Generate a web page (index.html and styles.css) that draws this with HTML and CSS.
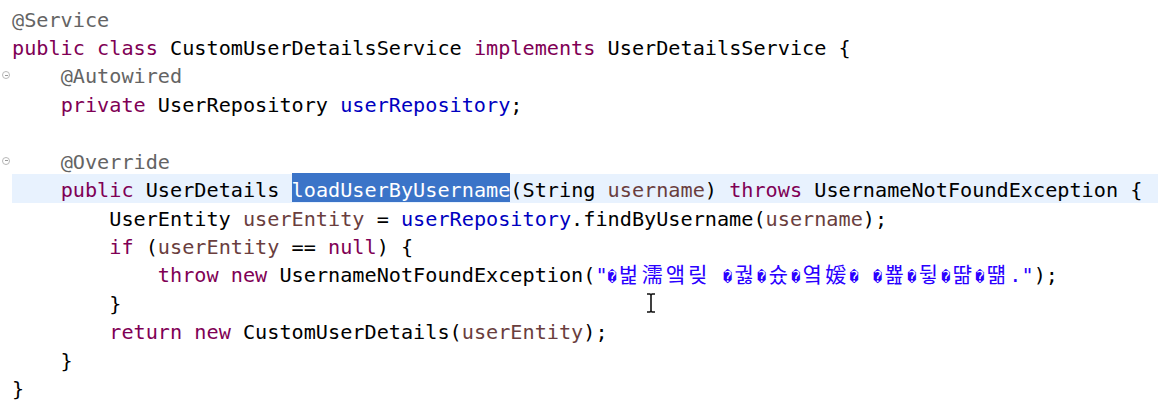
FILE: index.html
```html
<!DOCTYPE html>
<html lang="ko">
<head>
    <meta charset="UTF-8">
    <title>CustomUserDetailsService.java</title>
    <link rel="stylesheet" href="styles.css">
</head>
<body>

    <div class="editor">
        <div class="line"><span class="gutter"></span><span class="code"><span class="ann">@Service</span></span></div>
        <div class="line"><span class="gutter"></span><span class="code"><span class="kw">public</span> <span class="kw">class</span> CustomUserDetailsService <span class="kw">implements</span> UserDetailsService {</span></div>
        <div class="line"><span class="gutter"><span class="fold"></span></span><span class="code">    <span class="ann">@Autowired</span></span></div>
        <div class="line"><span class="gutter"></span><span class="code">    <span class="kw">private</span> UserRepository <span class="field">userRepository</span>;</span></div>
        <div class="line"><span class="gutter"></span><span class="code"></span></div>
        <div class="line"><span class="gutter"><span class="fold"></span></span><span class="code">    <span class="ann">@Override</span></span></div>
        <div class="line current"><span class="gutter"></span><span class="code">    <span class="kw">public</span> UserDetails <span class="sel">loadUserByUsername</span>(String <span class="local">username</span>) <span class="kw">throws</span> UsernameNotFoundException {</span></div>
        <div class="line"><span class="gutter"></span><span class="code">        UserEntity <span class="local">userEntity</span> = <span class="field">userRepository</span>.findByUsername(<span class="local">username</span>);</span></div>
        <div class="line"><span class="gutter"></span><span class="code">        <span class="kw">if</span> (<span class="local">userEntity</span> == <span class="kw">null</span>) {</span></div>
        <div class="line"><span class="gutter"></span><span class="code">            <span class="kw">throw</span> <span class="kw">new</span> UsernameNotFoundException(<span class="str">"<span class="broken"><span class="bad">�</span>벑濡앸맂</span> <span class="broken"><span class="bad">�</span>궗<span class="bad">�</span>슜<span class="bad">�</span>옄媛<span class="bad">�</span></span> <span class="broken"><span class="bad">�</span>뾾<span class="bad">�</span>뒿<span class="bad">�</span>땲<span class="bad">�</span>떎</span>."</span>);</span></div>
        <div class="line"><span class="gutter"></span><span class="code">        }</span></div>
        <div class="line"><span class="gutter"></span><span class="code">        <span class="kw">return</span> <span class="kw">new</span> CustomUserDetails(<span class="local">userEntity</span>);</span></div>
        <div class="line"><span class="gutter"></span><span class="code">    }</span></div>
        <div class="line"><span class="gutter"></span><span class="code">}</span></div>

        <!-- mouse pointer left over the text -->
        <svg class="ibeam" width="12" height="22" viewBox="0 0 12 22">
            <path d="M2 2h3l1 1 1-1h3M6 3v16M2 20h3l1-1 1 1h3" fill="none" stroke="#fff" stroke-width="3.5"/>
            <path d="M2 2h3l1 1 1-1h3M6 3v16M2 20h3l1-1 1 1h3" fill="none" stroke="#111" stroke-width="1.6"/>
        </svg>
    </div>

</body>
</html>
```

FILE: styles.css
```css
body { margin: 0; background: #ffffff; }

.editor { position: relative; padding-top: 3.8px; font-family: "DejaVu Sans Mono", monospace; font-size: 20.2px; color: #000000; }

.line { display: flex; height: 28.45px; box-sizing: border-box; padding-top: 4.75px; line-height: 23.5px; }
.line.current .code { background-color: #e8f2fe; margin-top: -4.75px; padding-top: 4.75px; }

.gutter { position: relative; width: 12px; flex-shrink: 0; }
.code { flex: 1; white-space: pre; }

/* folding marker: small circle with a minus */
.fold { position: absolute; left: 2px; top: 5.8px; width: 6px; height: 6px; border: 1px solid #b8b8b8; border-radius: 50%; }
.fold::after { content: ""; position: absolute; left: 1.5px; top: 2.5px; width: 3px; height: 1px; background: #9a9a9a; }

.kw { color: #7f0055; }
.ann { color: #646464; }
.field { color: #0000c0; }
.local { color: #6a3e3e; }
.str { color: #2a00ff; }

/* string read with the wrong charset */
.broken { font-family: "Noto Sans CJK KR", "DejaVu Sans", sans-serif; font-size: 21px; letter-spacing: 3.2px; line-height: 10px; }
.bad { font-family: "DejaVu Sans Mono", monospace; font-size: 15px; letter-spacing: 2.5px; }

.sel { background-color: #3b74c8; color: #ffffff; padding: 4.75px 0 0.2px; }

.ibeam { position: absolute; left: 645px; top: 292px; }
```
